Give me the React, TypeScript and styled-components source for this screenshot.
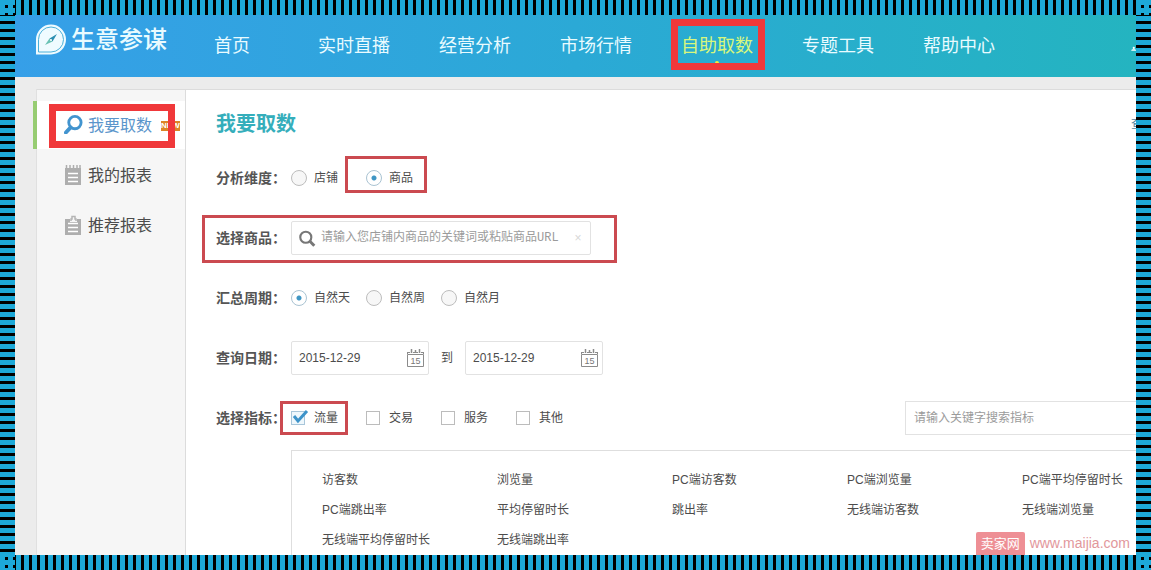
import React from "react";
import styled, { createGlobalStyle, css } from "styled-components";

const GlobalStyle = createGlobalStyle`
  * { box-sizing: border-box; }
  body {
    margin: 0;
    background: #ececec;
    color: #4c4c4c;
    font: 12px/18px "Liberation Sans", "Noto Sans CJK SC", sans-serif;
  }
  h1, ul { margin: 0; padding: 0; }
  ul { list-style: none; }
  a { color: inherit; text-decoration: none; }
  input { font: inherit; color: inherit; margin: 0; }
`;

const vertical = "linear-gradient(to right, #1da9d9 5px, transparent 5px)";
const horizontal = "linear-gradient(to bottom, #1da9d9 5px, transparent 5px)";

const Frame = styled.div`
  display: grid;
  grid-template: 15px minmax(0, 1fr) 15px / 15px minmax(0, 1fr) 15px;
  min-height: 100vh;
`;

const Strip = styled.div<{ $kind: "corner" | "rows" | "columns" }>`
  background-color: #000;
  background-image: ${(p) =>
    p.$kind === "corner" ? `${vertical}, ${horizontal}` : p.$kind === "columns" ? vertical : horizontal};
  background-size: 8px 8px;
  background-attachment: fixed;
`;

const Screen = styled.div`
  position: relative;
  display: flex;
  flex-direction: column;
  overflow: hidden;
`;

const Highlight = styled.span<{ $bold?: boolean; $inset: string }>`
  position: absolute;
  inset: ${(p) => p.$inset};
  border: ${(p) => (p.$bold ? "7px solid #f0383a" : "3px solid #cb4a50")};
  pointer-events: none;
`;

const Header = styled.header`
  display: flex;
  align-items: center;
  height: 62px;
  padding-left: 20px;
  background: linear-gradient(to right, #369fe8, #2ba9d6 50%, #24b4c0);
  color: #e9fbff;
`;

const Logo = styled.a`
  display: flex;
  align-items: center;
  gap: 4px;
  margin: 0 47px 12px 0;
  font-size: 24px;
  font-weight: 500;
  line-height: 32px;
  white-space: nowrap;
`;

const Nav = styled.nav`
  display: flex;
  gap: 49px;
  font-size: 18px;
  line-height: 28px;
  white-space: nowrap;
`;

const NavLink = styled.a<{ $active?: boolean; $home?: boolean }>`
  position: relative;
  color: ${(p) => (p.$active ? "#d8f77c" : "inherit")};
  margin-right: ${(p) => (p.$home ? "19px" : "0")};
`;

const Pointer = styled.span`
  position: absolute;
  left: 50%;
  bottom: -4px;
  width: 4px;
  height: 3px;
  margin-left: -2px;
  border-radius: 2px 2px 0 0;
  background: #f2ee3a;
`;

const Account = styled.a`
  display: flex;
  width: 5px;
  margin: 6px 0 0 auto;
  overflow: hidden;
`;

const Body = styled.div`
  display: flex;
  flex: 1;
  padding: 12px 0 0 22px;
  background: #ececec;
`;

const Sidebar = styled.aside`
  flex: none;
  width: 149px;
  padding-top: 11px;
  border: solid #dcdcdc;
  border-width: 1px 1px 0 0;
  box-shadow: -1px 0 #e0e0e0;
  background: #f6f6f6;
`;

const Menu = styled.ul`
  display: flex;
  flex-direction: column;
  gap: 2px;
`;

const MenuLink = styled.a<{ $active?: boolean }>`
  position: relative;
  display: flex;
  align-items: center;
  gap: 5px;
  height: 48px;
  padding: 2px 0 0 27px;
  font-size: 16px;
  line-height: 24px;
  white-space: nowrap;
  svg { margin-bottom: 3px; }
  ${(p) =>
    p.$active &&
    css`
      background: #fff;
      color: #5b95cb;
      box-shadow: -4px 0 #97cc72;
    `}
`;

const NewBadge = styled.span`
  margin-left: 4px;
  padding: 0;
  background: #dd8426;
  color: #fff;
  font-size: 8px;
  font-weight: 700;
  line-height: 10px;
`;

const Main = styled.main`
  flex: 1;
  min-width: 0;
  padding: 19px 0 0 30px;
  border-top: 1px solid #dcdcdc;
  background: #fff;
`;

const TitleBar = styled.div`
  display: flex;
  align-items: center;
  justify-content: space-between;
  margin-bottom: 22px;
`;

const Title = styled.h1`
  color: #35aebb;
  font-size: 20px;
  line-height: 30px;
`;

const HelpLink = styled.a`
  width: 5px;
  overflow: hidden;
  color: #4e83a0;
  white-space: nowrap;
`;

const Form = styled.form`
  display: flex;
  flex-direction: column;
  gap: 26px;
`;

const Row = styled.div`
  position: relative;
  display: flex;
  align-items: center;
  height: 34px;
`;

const RowLabel = styled.span`
  flex: none;
  width: 75px;
  font-size: 14px;
  font-weight: 700;
  line-height: 20px;
  white-space: nowrap;
  color: #555;
`;

const Option = styled.label<{ $gap: number }>`
  position: relative;
  display: flex;
  align-items: center;
  gap: ${(p) => p.$gap}px;
  width: 75px;
  white-space: nowrap;
`;

const Radio = styled.input.attrs({ type: "radio" })`
  appearance: none;
  width: 16px;
  height: 16px;
  border: 1px solid #bdbdbd;
  border-radius: 50%;
  background: #f7f7f7;
  &:checked {
    border-color: #a9c3d2;
    background: radial-gradient(circle, #3f96c4 2px, #fff 3px);
  }
`;

const Checkbox = styled.input.attrs({ type: "checkbox" })`
  appearance: none;
  width: 14px;
  height: 14px;
  border: 1px solid #bcbcbc;
  background: #fff;
  &:checked {
    border-color: #a8c6da;
    background: #eef7fc;
  }
`;

const Tick = styled.svg`
  position: absolute;
  left: 1px;
  top: 1px;
  pointer-events: none;
`;

const Field = styled.label<{ $width: number }>`
  display: flex;
  align-items: center;
  gap: 5px;
  width: ${(p) => p.$width}px;
  height: 34px;
  padding: 0 4px 0 7px;
  border: 1px solid #e2e2e2;
  border-radius: 2px;
  background: #fff;
`;

const TextInput = styled.input`
  flex: 1;
  min-width: 0;
  padding: 0;
  border: 0;
  outline: 0;
  background: none;
  &::placeholder { color: #9b9b9b; opacity: 1; }
`;

const ProductInput = styled(TextInput)`
  font-family: "Liberation Mono", "Noto Sans CJK SC", monospace;
`;

const Clear = styled.button`
  width: 16px;
  padding: 0;
  border: 0;
  background: none;
  color: #d8d8d8;
  font: 12px/16px "Liberation Sans", sans-serif;
`;

const To = styled.span`
  margin: 0 12px;
`;

const MetricSearch = styled(TextInput)`
  flex: none;
  width: 231px;
  height: 34px;
  margin-left: auto;
  padding-left: 8px;
  border: solid #e2e2e2;
  border-width: 1px 0 1px 1px;
`;

const Metrics = styled.ul`
  display: grid;
  grid-template-columns: repeat(5, 175px);
  grid-auto-rows: 30px;
  align-items: center;
  margin: 15px 0 0 75px;
  padding: 14px 0 0 30px;
  border: solid #dedede;
  border-width: 1px 0 0 1px;
  white-space: nowrap;
`;

const Watermark = styled.a`
  position: absolute;
  right: 6px;
  bottom: 0;
  display: flex;
  align-items: center;
  gap: 5px;
  color: #e2979c;
  font-size: 14px;
  line-height: 23px;
`;

const WatermarkTag = styled.span`
  padding: 0 5px;
  border-radius: 2px 2px 0 0;
  background: #ee8f95;
  color: #fff;
  font-size: 13px;
`;

const LogoMark = () => (
  <svg width="32" height="32" viewBox="0 0 32 32" fill="none">
    <path d="M1 30.500V15.500A15 15 0 1 1 16 30.500Z" fill="#effbff" />
    <path d="M3.500 28V15.500A12.500 12.500 0 1 1 16 28Z" stroke="#4bb0d8" strokeWidth="1" />
    <path d="M22 10L17.500 17.500L14.500 14.500Z" fill="#2c8fb2" />
    <path d="M10 21L14.500 14.500L17.500 17.500Z" fill="#69c2b4" />
    <circle cx="16" cy="16" r="1" fill="#fff" />
  </svg>
);

const Magnifier = ({ size, width, flip }: { size: number; width: number; flip?: boolean }) => (
  <svg width={size} height={size} viewBox="0 0 20 20" fill="none" stroke={flip ? "#4294cf" : "#777"} strokeWidth={width}>
    {flip ? (
      <>
        <circle cx="11.500" cy="8" r="6.500" />
        <path d="M7 13L2 18.500" strokeWidth="4" strokeLinecap="round" />
      </>
    ) : (
      <>
        <circle cx="8" cy="8.500" r="6.500" />
        <path d="M12.500 13L18 18.500" strokeWidth="3.500" />
      </>
    )}
  </svg>
);

const ReportIcon = ({ clip }: { clip?: boolean }) => (
  <svg width="19" height="20" viewBox="0 0 19 20">
    <path d={clip ? "M1 4H6V7H13V4H17V20H1Z" : "M1 3H17V20H1Z"} fill="#aeaeae" />
    {clip ? (
      <path d="M7 6V4H8V1.500H11V4H12V6" fill="none" stroke="#b4b4b4" strokeWidth="1.500" />
    ) : (
      <path d="M2.500 0V4M6 0V4M9.500 0V4M13 0V4M16 0V4" stroke="#aeaeae" strokeWidth="1.500" />
    )}
    <path d="M4 8.500H14M4 12.500H14M4 16.500H14" stroke="#fff" strokeWidth="1.500" />
  </svg>
);

const CalendarIcon = () => (
  <svg width="17" height="18" viewBox="0 0 17 18" fill="none" stroke="#8b8b8b">
    <path d="M.5 5.500H16.500V17.500H.5Z" />
    <path d="M.5 5V3M16.500 5V3M0 3.500H3M6 3.500H11M14 3.500H17" />
    <path d="M4.500 0V4M12.500 0V4M8.500 1V4" strokeWidth="1.500" />
    <text x="8.500" y="15" textAnchor="middle" fontSize="9" fill="#777" stroke="none" fontFamily="Liberation Sans, sans-serif">15</text>
  </svg>
);

const navItems = ["首页", "实时直播", "经营分析", "市场行情", "自助取数", "专题工具", "帮助中心"];

const periods = ["自然天", "自然周", "自然月"];

const categories = ["流量", "交易", "服务", "其他"];

const metrics = [
  "访客数", "浏览量", "PC端访客数", "PC端浏览量", "PC端平均停留时长",
  "PC端跳出率", "平均停留时长", "跳出率", "无线端访客数", "无线端浏览量",
  "无线端平均停留时长", "无线端跳出率",
];

const DateField = ({ label }: { label: string }) => (
  <Field $width={138}>
    <TextInput aria-label={label} defaultValue="2015-12-29" />
    <CalendarIcon />
  </Field>
);

export default function App() {
  return (
    <>
      <GlobalStyle />
      <Frame>
        <Strip $kind="corner" />
        <Strip $kind="columns" />
        <Strip $kind="corner" />
        <Strip $kind="rows" />
        <Screen>
          <Header>
            <Logo href="#">
              <LogoMark />
              生意参谋
            </Logo>
            <Nav>
              {navItems.map((item) => {
                const active = item === "自助取数";
                return (
                  <NavLink key={item} href="#" $active={active} $home={item === "首页"}>
                    {item}
                    {active && <Pointer />}
                    {active && <Highlight $bold $inset="-13px -12px -10px -10px" />}
                  </NavLink>
                );
              })}
            </Nav>
            <Account href="#" aria-label="账户">
              <svg width="18" height="18" viewBox="0 0 18 18" fill="#fff">
                <circle cx="10" cy="5" r="4" />
                <path d="M1 15C1 12 3 10.500 6 10H14C17 10.500 18 12 18 15Z" />
              </svg>
            </Account>
          </Header>
          <Body>
            <Sidebar>
              <Menu>
                <li>
                  <MenuLink href="#" $active>
                    <Magnifier size={19} width={3} flip />
                    我要取数
                    <NewBadge>NEW</NewBadge>
                    <Highlight $bold $inset="3px 10px 1px 12px" />
                  </MenuLink>
                </li>
                <li>
                  <MenuLink href="#">
                    <ReportIcon />
                    我的报表
                  </MenuLink>
                </li>
                <li>
                  <MenuLink href="#">
                    <ReportIcon clip />
                    推荐报表
                  </MenuLink>
                </li>
              </Menu>
            </Sidebar>
            <Main>
              <TitleBar>
                <Title>我要取数</Title>
                <HelpLink href="#">查</HelpLink>
              </TitleBar>
              <Form>
                <Row role="radiogroup" aria-label="分析维度">
                  <RowLabel>分析维度：</RowLabel>
                  <Option $gap={7}>
                    <Radio name="dimension" />
                    店铺
                  </Option>
                  <Option $gap={7}>
                    <Radio name="dimension" defaultChecked />
                    商品
                    <Highlight $inset="-13px 14px -6px -21px" />
                  </Option>
                </Row>
                <Row>
                  <RowLabel as="label" htmlFor="product">选择商品：</RowLabel>
                  <Field as="div" $width={300}>
                    <Magnifier size={17} width={2.5} />
                    <ProductInput id="product" placeholder="请输入您店铺内商品的关键词或粘贴商品URL" />
                    <Clear type="button" aria-label="清除">×</Clear>
                  </Field>
                  <Highlight $inset="-6px auto -8px -14px" style={{ width: 415 }} />
                </Row>
                <Row role="radiogroup" aria-label="汇总周期">
                  <RowLabel>汇总周期：</RowLabel>
                  {periods.map((period, i) => (
                    <Option key={period} $gap={7}>
                      <Radio name="period" defaultChecked={i === 0} />
                      {period}
                    </Option>
                  ))}
                </Row>
                <Row>
                  <RowLabel>查询日期：</RowLabel>
                  <DateField label="开始日期" />
                  <To>到</To>
                  <DateField label="结束日期" />
                </Row>
                <Row>
                  <RowLabel>选择指标：</RowLabel>
                  {categories.map((category, i) => (
                    <Option key={category} $gap={9}>
                      <Checkbox defaultChecked={i === 0} />
                      {category}
                      {i === 0 && (
                        <Tick width="17" height="14" viewBox="0 0 17 14" fill="none" stroke="#3d93c9" strokeWidth="3">
                          <path d="M2 6L6 11L15 1" />
                        </Tick>
                      )}
                      {i === 0 && <Highlight $inset="-8px 18px -8px -11px" />}
                    </Option>
                  ))}
                  <MetricSearch aria-label="搜索指标" placeholder="请输入关键字搜索指标" />
                </Row>
              </Form>
              <Metrics>
                {metrics.map((metric) => (
                  <li key={metric}>{metric}</li>
                ))}
              </Metrics>
            </Main>
          </Body>
          <Watermark href="#">
            <WatermarkTag>卖家网</WatermarkTag>
            www.maijia.com
          </Watermark>
        </Screen>
        <Strip $kind="rows" />
        <Strip $kind="corner" />
        <Strip $kind="columns" />
        <Strip $kind="corner" />
      </Frame>
    </>
  );
}
